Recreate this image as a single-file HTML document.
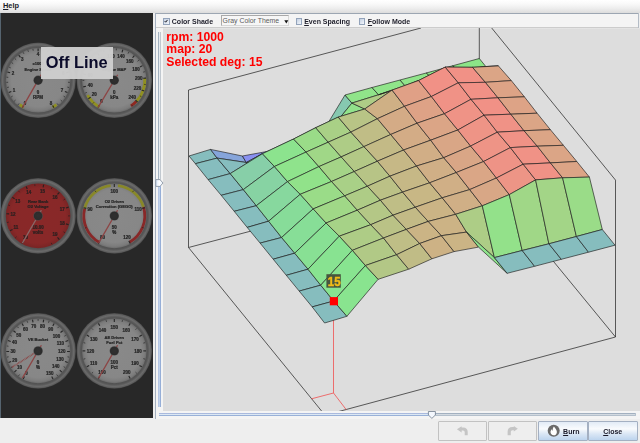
<!DOCTYPE html>
<html><head><meta charset="utf-8"><title>3D Table</title>
<style>
html,body{margin:0;padding:0;}
body{width:640px;height:443px;overflow:hidden;background:#eeeeee;position:relative;font-family:"Liberation Sans",sans-serif;}
.abs{position:absolute;}
#menubar{left:0;top:0;width:640px;height:13px;background:linear-gradient(#ffffff 0%,#f9f9f9 30%,#ededed 65%,#dcdcdc 100%);}
#help{left:3px;top:1.2px;font-size:7.4px;font-weight:bold;color:#1c1c28;line-height:10px;}
#help u{text-decoration:underline;text-underline-offset:0.5px;}
#dark{left:0;top:13px;width:153px;height:405.2px;background:#282828;}
#lborder{left:0;top:13px;width:1px;height:405.2px;background:#56646f;}
#rpanel{left:155px;top:13px;width:485px;height:405.5px;background:#f4f4f4;border-left:1px solid #a4b0c0;border-top:1px solid #9ca6b2;box-sizing:border-box;}
#tbline{left:156px;top:27px;width:482px;height:1px;background:#cccccc;}
#view{left:163px;top:28px;width:477px;height:383px;background:linear-gradient(#e8e8e8 0px,#dddddd 1.2px);}
.cb{width:4.2px;height:4.2px;border:0.9px solid #93a3ba;background:linear-gradient(135deg,#c4d0e2,#f2f6fb);top:18.4px;}
.lbl{font-size:7px;font-weight:bold;color:#1e1e2a;top:16.7px;line-height:10px;white-space:nowrap;}
#combo{left:220.5px;top:15.3px;width:68px;height:11px;box-sizing:border-box;border:1px solid #a9a9a9;border-right-color:#d8d8d8;border-bottom-color:#d8d8d8;background:#f6f6f6;}
#combotxt{left:222.6px;top:16.3px;font-size:6.9px;color:#5c5c5c;line-height:10px;white-space:nowrap;}
.red{color:#ff0000;font-weight:bold;font-size:12.2px;line-height:12.2px;left:166.3px;white-space:nowrap;}
#offline{left:40.5px;top:46.7px;width:72.3px;height:32.8px;background:rgba(207,207,207,0.96);}
#offtxt{left:40.5px;top:45.8px;width:72.3px;text-align:center;font-weight:bold;font-size:16.4px;line-height:32px;color:#0b0b2a;white-space:nowrap;}
.btn{top:421px;height:19.5px;box-sizing:border-box;border:1px solid #9eaabc;border-radius:1px;}
.btn.dis{background:#eeeeee;border-color:#c2c2c2;}
.btn.en{background:linear-gradient(#e2ebf6 0%,#f9fbfd 38%,#dbe7f5 65%,#bdd4ee 100%);border-color:#a4b0c2;}
.btxt{font-size:7px;font-weight:bold;color:#1a1a2a;top:426.7px;line-height:10px;white-space:nowrap;}
.gn{font-size:4.5px;font-weight:bold;text-anchor:middle;stroke-width:0.22px;font-family:"Liberation Sans",sans-serif;}
.gl{font-size:4.1px;font-weight:bold;text-anchor:middle;stroke-width:0.22px;font-family:"Liberation Sans",sans-serif;}
</style></head><body>
<div id="menubar" class="abs"></div>
<div id="help" class="abs"><u>H</u>elp</div>
<div id="dark" class="abs"></div>
<div id="lborder" class="abs"></div>
<svg class="abs" style="left:0;top:13px;will-change:transform" width="153" height="406" viewBox="0 13 153 406">
<defs>
<radialGradient id="bez" cx="0.5" cy="0.5" r="0.5">
<stop offset="0" stop-color="#525252"/><stop offset="0.86" stop-color="#525252"/><stop offset="0.895" stop-color="#585858"/><stop offset="0.94" stop-color="#6b6b6b"/><stop offset="0.975" stop-color="#5c5c5c"/><stop offset="1" stop-color="#444444"/>
</radialGradient>
<radialGradient id="faceL" cx="0.5" cy="0.5" r="0.5">
<stop offset="0" stop-color="#898989"/><stop offset="0.82" stop-color="#878787"/><stop offset="0.94" stop-color="#7c7c7c"/><stop offset="1" stop-color="#6c6c6c"/>
</radialGradient>
<radialGradient id="faceR" cx="0.5" cy="0.5" r="0.5">
<stop offset="0" stop-color="#892828"/><stop offset="0.85" stop-color="#882828"/><stop offset="1" stop-color="#782424"/>
</radialGradient>
<radialGradient id="hub" cx="0.5" cy="0.5" r="0.5">
<stop offset="0" stop-color="#303030"/><stop offset="0.8" stop-color="#2c2c2c"/><stop offset="1" stop-color="#4a4a4a"/>
</radialGradient>
</defs>
<g>
<circle cx="38.1" cy="80.3" r="37.8" fill="url(#bez)"/>
<circle cx="38.1" cy="80.3" r="32.3" fill="url(#faceL)"/>
<path d="M23.78 107.23 A30.50 30.50 0 0 1 19.74 104.66" stroke="#909020" stroke-width="2.8" fill="none"/>
<path d="M56.46 104.66 A30.50 30.50 0 0 1 52.42 107.23" stroke="#909020" stroke-width="2.8" fill="none"/>
<line x1="23.60" y1="105.41" x2="22.20" y2="107.84" stroke="#262626" stroke-width="1.1"/>
<line x1="19.07" y1="103.49" x2="17.93" y2="104.88" stroke="#262626" stroke-width="0.7"/>
<line x1="15.54" y1="100.08" x2="14.19" y2="101.27" stroke="#262626" stroke-width="0.7"/>
<line x1="12.62" y1="96.14" x2="11.10" y2="97.09" stroke="#262626" stroke-width="0.7"/>
<line x1="11.31" y1="91.40" x2="8.72" y2="92.47" stroke="#262626" stroke-width="1.1"/>
<line x1="8.88" y1="87.11" x2="7.13" y2="87.52" stroke="#262626" stroke-width="0.7"/>
<line x1="8.16" y1="82.26" x2="6.37" y2="82.38" stroke="#262626" stroke-width="0.7"/>
<line x1="8.24" y1="77.36" x2="6.45" y2="77.18" stroke="#262626" stroke-width="0.7"/>
<line x1="10.09" y1="72.79" x2="7.38" y2="72.07" stroke="#262626" stroke-width="1.1"/>
<line x1="10.77" y1="67.92" x2="9.13" y2="67.18" stroke="#262626" stroke-width="0.7"/>
<line x1="13.16" y1="63.63" x2="11.66" y2="62.63" stroke="#262626" stroke-width="0.7"/>
<line x1="16.20" y1="59.79" x2="14.89" y2="58.56" stroke="#262626" stroke-width="0.7"/>
<line x1="20.45" y1="57.29" x2="18.74" y2="55.07" stroke="#262626" stroke-width="1.1"/>
<line x1="23.96" y1="53.84" x2="23.11" y2="52.25" stroke="#262626" stroke-width="0.7"/>
<line x1="28.46" y1="51.89" x2="27.88" y2="50.19" stroke="#262626" stroke-width="0.7"/>
<line x1="33.21" y1="50.70" x2="32.92" y2="48.92" stroke="#262626" stroke-width="0.7"/>
<line x1="38.10" y1="51.30" x2="38.10" y2="48.50" stroke="#262626" stroke-width="1.1"/>
<line x1="42.99" y1="50.70" x2="43.28" y2="48.92" stroke="#262626" stroke-width="0.7"/>
<line x1="47.74" y1="51.89" x2="48.32" y2="50.19" stroke="#262626" stroke-width="0.7"/>
<line x1="52.24" y1="53.84" x2="53.09" y2="52.25" stroke="#262626" stroke-width="0.7"/>
<line x1="55.75" y1="57.29" x2="57.46" y2="55.07" stroke="#262626" stroke-width="1.1"/>
<line x1="60.00" y1="59.79" x2="61.31" y2="58.56" stroke="#262626" stroke-width="0.7"/>
<line x1="63.04" y1="63.63" x2="64.54" y2="62.63" stroke="#262626" stroke-width="0.7"/>
<line x1="65.43" y1="67.92" x2="67.07" y2="67.18" stroke="#262626" stroke-width="0.7"/>
<line x1="66.11" y1="72.79" x2="68.82" y2="72.07" stroke="#262626" stroke-width="1.1"/>
<line x1="67.96" y1="77.36" x2="69.75" y2="77.18" stroke="#262626" stroke-width="0.7"/>
<line x1="68.04" y1="82.26" x2="69.83" y2="82.38" stroke="#262626" stroke-width="0.7"/>
<line x1="67.32" y1="87.11" x2="69.07" y2="87.52" stroke="#262626" stroke-width="0.7"/>
<line x1="64.89" y1="91.40" x2="67.48" y2="92.47" stroke="#262626" stroke-width="1.1"/>
<line x1="63.58" y1="96.14" x2="65.10" y2="97.09" stroke="#262626" stroke-width="0.7"/>
<line x1="60.66" y1="100.08" x2="62.01" y2="101.27" stroke="#262626" stroke-width="0.7"/>
<line x1="57.13" y1="103.49" x2="58.27" y2="104.88" stroke="#262626" stroke-width="0.7"/>
<line x1="52.60" y1="105.41" x2="54.00" y2="107.84" stroke="#262626" stroke-width="1.1"/>
<text x="25.1" y="104.5" class="gn" fill="#262626" stroke="#262626">0</text>
<text x="14.1" y="91.9" class="gn" fill="#262626" stroke="#262626">1</text>
<text x="13.0" y="75.3" class="gn" fill="#262626" stroke="#262626">2</text>
<text x="22.3" y="61.4" class="gn" fill="#262626" stroke="#262626">3</text>
<text x="38.1" y="56.0" class="gn" fill="#262626" stroke="#262626">4</text>
<text x="53.9" y="61.4" class="gn" fill="#262626" stroke="#262626">5</text>
<text x="63.2" y="75.3" class="gn" fill="#262626" stroke="#262626">6</text>
<text x="62.1" y="91.9" class="gn" fill="#262626" stroke="#262626">7</text>
<text x="51.1" y="104.5" class="gn" fill="#262626" stroke="#262626">8</text>
<text x="38.1" y="71.0" class="gl" fill="#262626" stroke="#262626">Engine Speed</text>
<text x="38.1" y="65.0" class="gl" fill="#262626" stroke="#262626">x1000</text>
<text x="38.1" y="93.7" class="gn" fill="#262626" stroke="#262626">0</text>
<text x="38.1" y="98.7" class="gn" fill="#262626" stroke="#262626">RPM</text>

<line x1="41.35" y1="74.67" x2="22.35" y2="107.58" stroke="#8c4444" stroke-width="1.3"/>
<circle cx="38.1" cy="80.3" r="4.7" fill="url(#hub)"/>
</g>
<g>
<circle cx="114.3" cy="80.3" r="37.8" fill="url(#bez)"/>
<circle cx="114.3" cy="80.3" r="32.3" fill="url(#faceL)"/>
<path d="M99.51 106.98 A30.50 30.50 0 0 1 87.62 95.09" stroke="#909020" stroke-width="2.8" fill="none"/>
<path d="M144.73 78.17 A30.50 30.50 0 0 1 136.24 101.49" stroke="#909020" stroke-width="2.8" fill="none"/>
<path d="M136.24 101.49 A30.50 30.50 0 0 1 130.91 105.88" stroke="#902820" stroke-width="2.8" fill="none"/>
<line x1="99.36" y1="105.16" x2="97.92" y2="107.56" stroke="#262626" stroke-width="1.1"/>
<line x1="93.94" y1="102.33" x2="92.71" y2="103.65" stroke="#262626" stroke-width="0.7"/>
<line x1="90.69" y1="97.14" x2="88.41" y2="98.77" stroke="#262626" stroke-width="1.1"/>
<line x1="86.84" y1="92.38" x2="85.19" y2="93.11" stroke="#262626" stroke-width="0.7"/>
<line x1="85.93" y1="86.33" x2="83.19" y2="86.91" stroke="#262626" stroke-width="1.1"/>
<line x1="84.30" y1="80.43" x2="82.50" y2="80.44" stroke="#262626" stroke-width="0.7"/>
<line x1="85.88" y1="74.52" x2="83.14" y2="73.96" stroke="#262626" stroke-width="1.1"/>
<line x1="86.74" y1="68.46" x2="85.08" y2="67.75" stroke="#262626" stroke-width="0.7"/>
<line x1="90.54" y1="63.67" x2="88.25" y2="62.06" stroke="#262626" stroke-width="1.1"/>
<line x1="93.74" y1="58.45" x2="92.51" y2="57.14" stroke="#262626" stroke-width="0.7"/>
<line x1="99.15" y1="55.57" x2="97.68" y2="53.19" stroke="#262626" stroke-width="1.1"/>
<line x1="104.16" y1="52.06" x2="103.55" y2="50.37" stroke="#262626" stroke-width="0.7"/>
<line x1="110.26" y1="51.58" x2="109.87" y2="48.81" stroke="#262626" stroke-width="1.1"/>
<line x1="116.26" y1="50.36" x2="116.38" y2="48.57" stroke="#262626" stroke-width="0.7"/>
<line x1="122.05" y1="52.35" x2="122.80" y2="49.66" stroke="#262626" stroke-width="1.1"/>
<line x1="128.04" y1="53.63" x2="128.86" y2="52.03" stroke="#262626" stroke-width="0.7"/>
<line x1="132.55" y1="57.76" x2="134.31" y2="55.59" stroke="#262626" stroke-width="1.1"/>
<line x1="137.53" y1="61.32" x2="138.93" y2="60.18" stroke="#262626" stroke-width="0.7"/>
<line x1="140.02" y1="66.91" x2="142.51" y2="65.62" stroke="#262626" stroke-width="1.1"/>
<line x1="143.17" y1="72.16" x2="144.91" y2="71.67" stroke="#262626" stroke-width="0.7"/>
<line x1="143.23" y1="78.28" x2="146.02" y2="78.08" stroke="#262626" stroke-width="1.1"/>
<line x1="144.03" y1="84.35" x2="145.81" y2="84.59" stroke="#262626" stroke-width="0.7"/>
<line x1="141.64" y1="89.98" x2="144.28" y2="90.92" stroke="#262626" stroke-width="1.1"/>
<line x1="139.95" y1="95.86" x2="141.49" y2="96.80" stroke="#262626" stroke-width="0.7"/>
<line x1="135.51" y1="100.08" x2="137.56" y2="101.99" stroke="#262626" stroke-width="1.1"/>
<line x1="131.61" y1="104.80" x2="132.65" y2="106.27" stroke="#262626" stroke-width="0.7"/>
<text x="101.6" y="103.1" class="gn" fill="#262626" stroke="#262626">0</text>
<text x="94.3" y="96.3" class="gn" fill="#262626" stroke="#262626">20</text>
<text x="90.2" y="87.1" class="gn" fill="#262626" stroke="#262626">40</text>
<text x="90.2" y="77.1" class="gn" fill="#262626" stroke="#262626">60</text>
<text x="94.1" y="67.9" class="gn" fill="#262626" stroke="#262626">80</text>
<text x="101.4" y="61.0" class="gn" fill="#262626" stroke="#262626">100</text>
<text x="110.9" y="57.6" class="gn" fill="#262626" stroke="#262626">120</text>
<text x="120.9" y="58.3" class="gn" fill="#262626" stroke="#262626">140</text>
<text x="129.8" y="62.9" class="gn" fill="#262626" stroke="#262626">160</text>
<text x="136.1" y="70.6" class="gn" fill="#262626" stroke="#262626">180</text>
<text x="138.8" y="80.3" class="gn" fill="#262626" stroke="#262626">200</text>
<text x="137.5" y="90.2" class="gn" fill="#262626" stroke="#262626">220</text>
<text x="132.3" y="98.8" class="gn" fill="#262626" stroke="#262626">240</text>
<text x="114.3" y="71.0" class="gl" fill="#262626" stroke="#262626">Engine MAP</text>
<text x="114.3" y="93.7" class="gn" fill="#262626" stroke="#262626">0</text>
<text x="114.3" y="98.7" class="gn" fill="#262626" stroke="#262626">kPa</text>

<line x1="117.65" y1="74.73" x2="98.08" y2="107.30" stroke="#8c4444" stroke-width="1.3"/>
<circle cx="114.3" cy="80.3" r="4.7" fill="url(#hub)"/>
</g>
<g>
<circle cx="38.1" cy="215.9" r="37.8" fill="url(#bez)"/>
<circle cx="38.1" cy="215.9" r="32.3" fill="url(#faceR)"/>
<line x1="23.60" y1="241.01" x2="22.20" y2="243.44" stroke="#2a2020" stroke-width="1.1"/>
<line x1="16.52" y1="236.74" x2="15.22" y2="237.99" stroke="#2a2020" stroke-width="0.7"/>
<line x1="12.49" y1="229.51" x2="10.02" y2="230.83" stroke="#2a2020" stroke-width="1.1"/>
<line x1="8.76" y1="222.14" x2="6.99" y2="222.51" stroke="#2a2020" stroke-width="0.7"/>
<line x1="9.17" y1="213.88" x2="6.38" y2="213.68" stroke="#2a2020" stroke-width="1.1"/>
<line x1="9.91" y1="205.64" x2="8.22" y2="205.02" stroke="#2a2020" stroke-width="0.7"/>
<line x1="14.64" y1="198.85" x2="12.37" y2="197.21" stroke="#2a2020" stroke-width="1.1"/>
<line x1="19.63" y1="192.26" x2="18.52" y2="190.84" stroke="#2a2020" stroke-width="0.7"/>
<line x1="27.24" y1="189.01" x2="26.19" y2="186.42" stroke="#2a2020" stroke-width="1.1"/>
<line x1="34.96" y1="186.06" x2="34.78" y2="184.27" stroke="#2a2020" stroke-width="0.7"/>
<line x1="43.14" y1="187.34" x2="43.62" y2="184.58" stroke="#2a2020" stroke-width="1.1"/>
<line x1="51.25" y1="188.94" x2="52.04" y2="187.32" stroke="#2a2020" stroke-width="0.7"/>
<line x1="57.50" y1="194.35" x2="59.38" y2="192.27" stroke="#2a2020" stroke-width="1.1"/>
<line x1="63.54" y1="200.00" x2="65.07" y2="199.05" stroke="#2a2020" stroke-width="0.7"/>
<line x1="65.98" y1="207.91" x2="68.67" y2="207.13" stroke="#2a2020" stroke-width="1.1"/>
<line x1="68.10" y1="215.90" x2="69.90" y2="215.90" stroke="#2a2020" stroke-width="0.7"/>
<line x1="65.98" y1="223.89" x2="68.67" y2="224.67" stroke="#2a2020" stroke-width="1.1"/>
<line x1="63.54" y1="231.80" x2="65.07" y2="232.75" stroke="#2a2020" stroke-width="0.7"/>
<line x1="57.50" y1="237.45" x2="59.38" y2="239.53" stroke="#2a2020" stroke-width="1.1"/>
<line x1="51.25" y1="242.86" x2="52.04" y2="244.48" stroke="#2a2020" stroke-width="0.7"/>
<text x="25.5" y="239.4" class="gn" fill="#2a2020" stroke="#2a2020">10</text>
<text x="15.8" y="229.4" class="gn" fill="#2a2020" stroke="#2a2020">11</text>
<text x="13.0" y="215.8" class="gn" fill="#2a2020" stroke="#2a2020">12</text>
<text x="17.7" y="202.8" class="gn" fill="#2a2020" stroke="#2a2020">13</text>
<text x="28.7" y="194.2" class="gn" fill="#2a2020" stroke="#2a2020">14</text>
<text x="42.5" y="192.8" class="gn" fill="#2a2020" stroke="#2a2020">15</text>
<text x="55.0" y="198.9" class="gn" fill="#2a2020" stroke="#2a2020">16</text>
<text x="62.3" y="210.7" class="gn" fill="#2a2020" stroke="#2a2020">17</text>
<text x="62.3" y="224.5" class="gn" fill="#2a2020" stroke="#2a2020">18</text>
<text x="55.0" y="236.3" class="gn" fill="#2a2020" stroke="#2a2020">19</text>
<text x="38.1" y="203.4" class="gl" fill="#2a2020" stroke="#2a2020">Rear Bank</text>
<text x="38.1" y="208.4" class="gl" fill="#2a2020" stroke="#2a2020">O2 Voltage</text>
<text x="38.1" y="229.3" class="gn" fill="#2a2020" stroke="#2a2020">10.00</text>
<text x="38.1" y="233.9" class="gn" fill="#2a2020" stroke="#2a2020">volts</text>

<line x1="41.35" y1="210.27" x2="22.35" y2="243.18" stroke="#8a6868" stroke-width="1.3"/>
<circle cx="38.1" cy="215.9" r="4.7" fill="url(#hub)"/>
</g>
<g>
<circle cx="114.3" cy="215.9" r="37.8" fill="url(#bez)"/>
<circle cx="114.3" cy="215.9" r="32.3" fill="url(#faceL)"/>
<path d="M99.51 242.58 A30.50 30.50 0 0 1 84.71 208.52" stroke="#882828" stroke-width="2.8" fill="none"/>
<path d="M84.71 208.52 A30.50 30.50 0 0 1 110.58 185.63" stroke="#888828" stroke-width="2.8" fill="none"/>
<path d="M118.02 185.63 A30.50 30.50 0 0 1 143.47 206.98" stroke="#888828" stroke-width="2.8" fill="none"/>
<path d="M143.47 206.98 A30.50 30.50 0 0 1 129.55 242.31" stroke="#882828" stroke-width="2.8" fill="none"/>
<line x1="99.80" y1="241.01" x2="98.40" y2="243.44" stroke="#262626" stroke-width="1.1"/>
<line x1="86.58" y1="227.38" x2="84.92" y2="228.07" stroke="#262626" stroke-width="0.7"/>
<line x1="86.29" y1="208.39" x2="83.58" y2="207.67" stroke="#262626" stroke-width="1.1"/>
<line x1="96.04" y1="192.10" x2="94.94" y2="190.67" stroke="#262626" stroke-width="0.7"/>
<line x1="114.30" y1="186.90" x2="114.30" y2="184.10" stroke="#262626" stroke-width="1.1"/>
<line x1="132.56" y1="192.10" x2="133.66" y2="190.67" stroke="#262626" stroke-width="0.7"/>
<line x1="142.31" y1="208.39" x2="145.02" y2="207.67" stroke="#262626" stroke-width="1.1"/>
<line x1="142.02" y1="227.38" x2="143.68" y2="228.07" stroke="#262626" stroke-width="0.7"/>
<line x1="128.80" y1="241.01" x2="130.20" y2="243.44" stroke="#262626" stroke-width="1.1"/>
<text x="102.5" y="238.9" class="gn" fill="#262626" stroke="#262626">80</text>
<text x="90.1" y="210.7" class="gn" fill="#262626" stroke="#262626">90</text>
<text x="114.3" y="193.3" class="gn" fill="#262626" stroke="#262626">100</text>
<text x="138.1" y="210.8" class="gn" fill="#262626" stroke="#262626">110</text>
<text x="126.9" y="238.6" class="gn" fill="#262626" stroke="#262626">120</text>
<text x="114.3" y="203.4" class="gl" fill="#262626" stroke="#262626">O2 Driven</text>
<text x="114.3" y="208.4" class="gl" fill="#262626" stroke="#262626">Correction (GEGO)</text>
<text x="114.3" y="229.3" class="gn" fill="#262626" stroke="#262626">50</text>
<text x="114.3" y="233.9" class="gn" fill="#262626" stroke="#262626">%</text>

<line x1="117.55" y1="210.27" x2="98.55" y2="243.18" stroke="#8c4444" stroke-width="1.3"/>
<circle cx="114.3" cy="215.9" r="4.7" fill="url(#hub)"/>
</g>
<g>
<circle cx="38.1" cy="350.9" r="37.8" fill="url(#bez)"/>
<circle cx="38.1" cy="350.9" r="32.3" fill="url(#faceL)"/>
<line x1="24.49" y1="376.51" x2="23.17" y2="378.98" stroke="#262626" stroke-width="1.1"/>
<line x1="19.58" y1="374.50" x2="18.46" y2="375.91" stroke="#262626" stroke-width="0.7"/>
<line x1="16.46" y1="370.20" x2="14.37" y2="372.07" stroke="#262626" stroke-width="1.1"/>
<line x1="12.55" y1="366.62" x2="11.02" y2="367.56" stroke="#262626" stroke-width="0.7"/>
<line x1="11.11" y1="361.51" x2="8.51" y2="362.54" stroke="#262626" stroke-width="1.1"/>
<line x1="8.68" y1="356.80" x2="6.92" y2="357.15" stroke="#262626" stroke-width="0.7"/>
<line x1="9.11" y1="351.51" x2="6.31" y2="351.57" stroke="#262626" stroke-width="1.1"/>
<line x1="8.46" y1="346.24" x2="6.69" y2="345.96" stroke="#262626" stroke-width="0.7"/>
<line x1="10.69" y1="341.43" x2="8.04" y2="340.51" stroke="#262626" stroke-width="1.1"/>
<line x1="11.91" y1="336.26" x2="10.34" y2="335.39" stroke="#262626" stroke-width="0.7"/>
<line x1="15.67" y1="332.52" x2="13.50" y2="330.74" stroke="#262626" stroke-width="1.1"/>
<line x1="18.60" y1="328.10" x2="17.43" y2="326.73" stroke="#262626" stroke-width="0.7"/>
<line x1="23.43" y1="325.89" x2="22.01" y2="323.47" stroke="#262626" stroke-width="1.1"/>
<line x1="27.71" y1="322.76" x2="27.08" y2="321.07" stroke="#262626" stroke-width="0.7"/>
<line x1="33.00" y1="322.35" x2="32.51" y2="319.60" stroke="#262626" stroke-width="1.1"/>
<line x1="38.10" y1="320.90" x2="38.10" y2="319.10" stroke="#262626" stroke-width="0.7"/>
<line x1="43.20" y1="322.35" x2="43.69" y2="319.60" stroke="#262626" stroke-width="1.1"/>
<line x1="48.49" y1="322.76" x2="49.12" y2="321.07" stroke="#262626" stroke-width="0.7"/>
<line x1="52.77" y1="325.89" x2="54.19" y2="323.47" stroke="#262626" stroke-width="1.1"/>
<line x1="57.60" y1="328.10" x2="58.77" y2="326.73" stroke="#262626" stroke-width="0.7"/>
<line x1="60.53" y1="332.52" x2="62.70" y2="330.74" stroke="#262626" stroke-width="1.1"/>
<line x1="64.29" y1="336.26" x2="65.86" y2="335.39" stroke="#262626" stroke-width="0.7"/>
<line x1="65.51" y1="341.43" x2="68.16" y2="340.51" stroke="#262626" stroke-width="1.1"/>
<line x1="67.74" y1="346.24" x2="69.51" y2="345.96" stroke="#262626" stroke-width="0.7"/>
<line x1="67.09" y1="351.51" x2="69.89" y2="351.57" stroke="#262626" stroke-width="1.1"/>
<line x1="67.52" y1="356.80" x2="69.28" y2="357.15" stroke="#262626" stroke-width="0.7"/>
<line x1="65.09" y1="361.51" x2="67.69" y2="362.54" stroke="#262626" stroke-width="1.1"/>
<line x1="63.65" y1="366.62" x2="65.18" y2="367.56" stroke="#262626" stroke-width="0.7"/>
<line x1="59.74" y1="370.20" x2="61.83" y2="372.07" stroke="#262626" stroke-width="1.1"/>
<line x1="56.62" y1="374.50" x2="57.74" y2="375.91" stroke="#262626" stroke-width="0.7"/>
<line x1="51.71" y1="376.51" x2="53.03" y2="378.98" stroke="#262626" stroke-width="1.1"/>
<text x="26.4" y="374.7" class="gn" fill="#262626" stroke="#262626">0</text>
<text x="19.4" y="369.2" class="gn" fill="#262626" stroke="#262626">10</text>
<text x="14.8" y="361.7" class="gn" fill="#262626" stroke="#262626">20</text>
<text x="13.1" y="353.1" class="gn" fill="#262626" stroke="#262626">30</text>
<text x="14.5" y="344.4" class="gn" fill="#262626" stroke="#262626">40</text>
<text x="18.8" y="336.7" class="gn" fill="#262626" stroke="#262626">50</text>
<text x="25.5" y="331.0" class="gn" fill="#262626" stroke="#262626">60</text>
<text x="33.7" y="328.0" class="gn" fill="#262626" stroke="#262626">70</text>
<text x="42.5" y="328.0" class="gn" fill="#262626" stroke="#262626">80</text>
<text x="50.8" y="331.0" class="gn" fill="#262626" stroke="#262626">90</text>
<text x="56.4" y="337.7" class="gn" fill="#262626" stroke="#262626">100</text>
<text x="60.4" y="344.9" class="gn" fill="#262626" stroke="#262626">110</text>
<text x="61.7" y="353.1" class="gn" fill="#262626" stroke="#262626">120</text>
<text x="60.1" y="361.3" class="gn" fill="#262626" stroke="#262626">130</text>
<text x="55.7" y="368.3" class="gn" fill="#262626" stroke="#262626">140</text>
<text x="49.8" y="374.7" class="gn" fill="#262626" stroke="#262626">150</text>
<text x="38.1" y="341.1" class="gl" fill="#262626" stroke="#262626">VE Bucket</text>
<text x="38.1" y="364.3" class="gn" fill="#262626" stroke="#262626">0</text>
<text x="38.1" y="369.3" class="gn" fill="#262626" stroke="#262626">%</text>
<line x1="38.1" y1="350.9" x2="11.81" y2="367.33" stroke="#8c4444" stroke-width="1.7" stroke-dasharray="0.8 0.7"/>
<line x1="41.35" y1="345.27" x2="22.35" y2="378.18" stroke="#8c4444" stroke-width="1.3"/>
<circle cx="38.1" cy="350.9" r="4.7" fill="url(#hub)"/>
</g>
<g>
<circle cx="114.3" cy="350.9" r="37.8" fill="url(#bez)"/>
<circle cx="114.3" cy="350.9" r="32.3" fill="url(#faceL)"/>
<line x1="99.80" y1="376.01" x2="98.40" y2="378.44" stroke="#262626" stroke-width="1.1"/>
<line x1="93.09" y1="372.11" x2="91.81" y2="373.39" stroke="#262626" stroke-width="0.7"/>
<line x1="89.19" y1="365.40" x2="86.76" y2="366.80" stroke="#262626" stroke-width="1.1"/>
<line x1="85.32" y1="358.66" x2="83.58" y2="359.13" stroke="#262626" stroke-width="0.7"/>
<line x1="85.30" y1="350.90" x2="82.50" y2="350.90" stroke="#262626" stroke-width="1.1"/>
<line x1="85.32" y1="343.14" x2="83.58" y2="342.67" stroke="#262626" stroke-width="0.7"/>
<line x1="89.19" y1="336.40" x2="86.76" y2="335.00" stroke="#262626" stroke-width="1.1"/>
<line x1="93.09" y1="329.69" x2="91.81" y2="328.41" stroke="#262626" stroke-width="0.7"/>
<line x1="99.80" y1="325.79" x2="98.40" y2="323.36" stroke="#262626" stroke-width="1.1"/>
<line x1="106.54" y1="321.92" x2="106.07" y2="320.18" stroke="#262626" stroke-width="0.7"/>
<line x1="114.30" y1="321.90" x2="114.30" y2="319.10" stroke="#262626" stroke-width="1.1"/>
<line x1="122.06" y1="321.92" x2="122.53" y2="320.18" stroke="#262626" stroke-width="0.7"/>
<line x1="128.80" y1="325.79" x2="130.20" y2="323.36" stroke="#262626" stroke-width="1.1"/>
<line x1="135.51" y1="329.69" x2="136.79" y2="328.41" stroke="#262626" stroke-width="0.7"/>
<line x1="139.41" y1="336.40" x2="141.84" y2="335.00" stroke="#262626" stroke-width="1.1"/>
<line x1="143.28" y1="343.14" x2="145.02" y2="342.67" stroke="#262626" stroke-width="0.7"/>
<line x1="143.30" y1="350.90" x2="146.10" y2="350.90" stroke="#262626" stroke-width="1.1"/>
<line x1="143.28" y1="358.66" x2="145.02" y2="359.13" stroke="#262626" stroke-width="0.7"/>
<line x1="139.41" y1="365.40" x2="141.84" y2="366.80" stroke="#262626" stroke-width="1.1"/>
<line x1="135.51" y1="372.11" x2="136.79" y2="373.39" stroke="#262626" stroke-width="0.7"/>
<line x1="128.80" y1="376.01" x2="130.20" y2="378.44" stroke="#262626" stroke-width="1.1"/>
<text x="101.9" y="374.1" class="gn" fill="#262626" stroke="#262626">100</text>
<text x="93.7" y="364.5" class="gn" fill="#262626" stroke="#262626">110</text>
<text x="90.5" y="352.6" class="gn" fill="#262626" stroke="#262626">120</text>
<text x="93.7" y="340.7" class="gn" fill="#262626" stroke="#262626">130</text>
<text x="102.4" y="332.0" class="gn" fill="#262626" stroke="#262626">140</text>
<text x="114.3" y="328.8" class="gn" fill="#262626" stroke="#262626">150</text>
<text x="126.2" y="332.0" class="gn" fill="#262626" stroke="#262626">160</text>
<text x="134.9" y="340.7" class="gn" fill="#262626" stroke="#262626">170</text>
<text x="138.1" y="352.6" class="gn" fill="#262626" stroke="#262626">180</text>
<text x="134.9" y="364.5" class="gn" fill="#262626" stroke="#262626">190</text>
<text x="126.7" y="374.1" class="gn" fill="#262626" stroke="#262626">200</text>
<text x="114.3" y="338.9" class="gl" fill="#262626" stroke="#262626">AE Driven</text>
<text x="114.3" y="343.9" class="gl" fill="#262626" stroke="#262626">Fuel Pct</text>
<text x="114.3" y="364.3" class="gn" fill="#262626" stroke="#262626">100</text>
<text x="114.3" y="369.3" class="gn" fill="#262626" stroke="#262626">Pct</text>

<line x1="117.55" y1="345.27" x2="98.55" y2="378.18" stroke="#8c4444" stroke-width="1.3"/>
<circle cx="114.3" cy="350.9" r="4.7" fill="url(#hub)"/>
</g>
</svg>
<div id="offline" class="abs"></div>
<div id="offtxt" class="abs">Off Line</div>

<div id="rpanel" class="abs"></div>
<div id="tbline" class="abs"></div>
<div class="abs" style="left:638px;top:13px;width:2px;height:15px;background:#eeeeee;border-left:1px solid #b4bcc6;box-sizing:border-box"></div>
<div class="abs cb" style="left:163.4px"></div>
<svg class="abs" style="left:163.4px;top:18.4px" width="6" height="6" viewBox="0 0 6 6"><path d="M1.7 3.1 L2.7 4.2 L4.5 1.9" stroke="#1a1a22" stroke-width="1" fill="none"/></svg>
<div class="abs lbl" style="left:171.8px">Color Shade</div>
<div id="combo" class="abs"></div>
<div id="combotxt" class="abs">Gray Color Theme</div>
<svg class="abs" style="left:284px;top:19.5px" width="5" height="4" viewBox="0 0 5 4"><path d="M0.3 0.3 L4.3 0.3 L2.3 3.4 Z" fill="#111"/></svg>
<div class="abs cb" style="left:296px"></div>
<div class="abs lbl" style="left:304.2px"><u>E</u>ven Spacing</div>
<div class="abs cb" style="left:359.2px"></div>
<div class="abs lbl" style="left:367.8px"><u>F</u>ollow Mode</div>

<div id="view" class="abs"></div>
<svg class="abs" style="left:163px;top:28px" width="477" height="383" viewBox="0 0 477 383">
<g stroke="#2a2a2a" stroke-width="0.75" fill="none">
<line x1="25.5" y1="62.0" x2="25.5" y2="219.5"/>
<line x1="25.5" y1="62.0" x2="258.0" y2="0.0"/>
<line x1="316.3" y1="0.0" x2="316.3" y2="72.0"/>
<line x1="328.7" y1="0.0" x2="452.5" y2="152.1"/>
<line x1="452.5" y1="152.1" x2="452.5" y2="309.0"/>
<line x1="25.5" y1="219.5" x2="162.0" y2="387.2"/>
<line x1="162.0" y1="387.2" x2="452.5" y2="309.0"/>
<line x1="25.5" y1="219.5" x2="316.3" y2="143.0"/>
<line x1="316.3" y1="143.0" x2="452.5" y2="309.0"/>
</g>
<g stroke="#f05050" stroke-width="0.8" fill="none">
<line x1="170.5" y1="277.0" x2="170.5" y2="365.0"/>
<line x1="170.5" y1="365.0" x2="148.5" y2="370.8"/>
<line x1="170.5" y1="365.0" x2="183.2" y2="381.6"/>
</g>
<g stroke="#1c1c1c" stroke-width="0.65" stroke-linejoin="round">
<polygon points="26.0,128.0 47.5,121.4 54.1,130.1 32.4,135.7" fill="#86bdbe"/>
<polygon points="47.5,121.4 79.4,128.0 83.3,134.5 54.1,130.1" fill="#86a5da"/>
<polygon points="79.4,128.0 117.5,121.0 124.0,130.0 83.3,134.5" fill="#8890f0"/>
<polygon points="117.5,121.0 139.7,119.0 146.2,120.0 124.0,130.0" fill="#8890f0"/>
<polygon points="139.7,119.0 162.0,100.0 168.7,99.9 146.2,120.0" fill="#879fe0"/>
<polygon points="162.0,100.0 182.0,67.0 188.9,75.1 168.7,99.9" fill="#86c8b0"/>
<polygon points="182.0,67.0 209.0,59.5 215.5,66.8 188.9,75.1" fill="#90e48a"/>
<polygon points="209.0,59.5 237.0,52.0 242.5,58.3 215.5,66.8" fill="#90e48a"/>
<polygon points="237.0,52.0 263.2,45.0 269.5,50.0 242.5,58.3" fill="#90e48a"/>
<polygon points="263.2,45.0 289.5,37.8 296.0,42.5 269.5,50.0" fill="#8ee488"/>
<polygon points="289.5,37.8 316.3,30.5 322.8,38.5 296.0,42.5" fill="#8ce488"/>
<polygon points="32.4,135.7 54.1,130.1 67.2,145.6 45.1,151.6" fill="#86bdbe"/>
<polygon points="54.1,130.1 83.3,134.5 99.4,125.7 67.2,145.6" fill="#86bdbe"/>
<polygon points="83.3,134.5 124.0,130.0 130.5,111.0 99.4,125.7" fill="#86bdbe"/>
<polygon points="124.0,130.0 146.2,120.0 152.7,99.7 130.5,111.0" fill="#86c6b3"/>
<polygon points="146.2,120.0 168.7,99.9 175.2,89.1 152.7,99.7" fill="#87dd98"/>
<polygon points="168.7,99.9 188.9,75.1 201.7,81.0 175.2,89.1" fill="#91e28b"/>
<polygon points="188.9,75.1 215.5,66.8 229.1,62.1 201.7,81.0" fill="#aecc86"/>
<polygon points="215.5,66.8 242.5,58.3 255.6,52.5 229.1,62.1" fill="#bdbf86"/>
<polygon points="242.5,58.3 269.5,50.0 282.2,39.1 255.6,52.5" fill="#c8b685"/>
<polygon points="269.5,50.0 296.0,42.5 309.5,39.3 282.2,39.1" fill="#c9b585"/>
<polygon points="296.0,42.5 322.8,38.5 335.4,37.9 309.5,39.3" fill="#bbc186"/>
<polygon points="45.1,151.6 67.2,145.6 80.3,161.6 58.2,167.3" fill="#86bdbe"/>
<polygon points="67.2,145.6 99.4,125.7 111.4,138.5 80.3,161.6" fill="#87cfa8"/>
<polygon points="99.4,125.7 130.5,111.0 143.0,124.1 111.4,138.5" fill="#8ce38e"/>
<polygon points="130.5,111.0 152.7,99.7 165.2,114.2 143.0,124.1" fill="#9adc88"/>
<polygon points="152.7,99.7 175.2,89.1 187.9,104.1 165.2,114.2" fill="#a9d086"/>
<polygon points="175.2,89.1 201.7,81.0 214.4,90.7 187.9,104.1" fill="#b8c486"/>
<polygon points="201.7,81.0 229.1,62.1 241.5,78.3 214.4,90.7" fill="#cfb085"/>
<polygon points="229.1,62.1 255.6,52.5 268.4,68.5 241.5,78.3" fill="#e0a086"/>
<polygon points="255.6,52.5 282.2,39.1 295.3,54.8 268.4,68.5" fill="#f19186"/>
<polygon points="282.2,39.1 309.5,39.3 322.4,54.3 295.3,54.8" fill="#f19186"/>
<polygon points="309.5,39.3 335.4,37.9 348.3,52.6 322.4,54.3" fill="#dba586"/>
<polygon points="58.2,167.3 80.3,161.6 93.3,177.7 71.2,183.3" fill="#86bdbe"/>
<polygon points="80.3,161.6 111.4,138.5 124.5,153.6 93.3,177.7" fill="#87d3a3"/>
<polygon points="111.4,138.5 143.0,124.1 155.9,138.6 124.5,153.6" fill="#8fe38c"/>
<polygon points="143.0,124.1 165.2,114.2 178.2,128.9 155.9,138.6" fill="#a0d787"/>
<polygon points="165.2,114.2 187.9,104.1 200.9,118.6 178.2,128.9" fill="#aecc86"/>
<polygon points="187.9,104.1 214.4,90.7 227.7,106.5 200.9,118.6" fill="#c0bd86"/>
<polygon points="214.4,90.7 241.5,78.3 254.1,95.2 227.7,106.5" fill="#d4ab86"/>
<polygon points="241.5,78.3 268.4,68.5 281.5,85.7 254.1,95.2" fill="#dea286"/>
<polygon points="268.4,68.5 295.3,54.8 308.0,71.3 281.5,85.7" fill="#f09286"/>
<polygon points="295.3,54.8 322.4,54.3 335.0,69.8 308.0,71.3" fill="#f19186"/>
<polygon points="322.4,54.3 348.3,52.6 361.4,68.8 335.0,69.8" fill="#dda386"/>
<polygon points="71.2,183.3 93.3,177.7 105.6,193.2 84.2,199.4" fill="#86bdbe"/>
<polygon points="93.3,177.7 124.5,153.6 137.2,166.3 105.6,193.2" fill="#87d89e"/>
<polygon points="124.5,153.6 155.9,138.6 168.5,153.5 137.2,166.3" fill="#91e28a"/>
<polygon points="155.9,138.6 178.2,128.9 191.3,143.5 168.5,153.5" fill="#a4d487"/>
<polygon points="178.2,128.9 200.9,118.6 214.4,133.2 191.3,143.5" fill="#b3c886"/>
<polygon points="200.9,118.6 227.7,106.5 240.6,122.0 214.4,133.2" fill="#c3ba86"/>
<polygon points="227.7,106.5 254.1,95.2 267.7,112.2 240.6,122.0" fill="#d3ac86"/>
<polygon points="254.1,95.2 281.5,85.7 294.8,102.0 267.7,112.2" fill="#dba586"/>
<polygon points="281.5,85.7 308.0,71.3 321.1,87.2 294.8,102.0" fill="#ef9386"/>
<polygon points="308.0,71.3 335.0,69.8 347.8,86.2 321.1,87.2" fill="#f19186"/>
<polygon points="335.0,69.8 361.4,68.8 374.1,85.2 347.8,86.2" fill="#dda386"/>
<polygon points="84.2,199.4 105.6,193.2 118.6,209.5 97.1,215.1" fill="#86bdbe"/>
<polygon points="105.6,193.2 137.2,166.3 150.2,180.9 118.6,209.5" fill="#87dc99"/>
<polygon points="137.2,166.3 168.5,153.5 181.7,167.8 150.2,180.9" fill="#9adc88"/>
<polygon points="168.5,153.5 191.3,143.5 204.4,158.2 181.7,167.8" fill="#a9d087"/>
<polygon points="191.3,143.5 214.4,133.2 226.9,148.2 204.4,158.2" fill="#b7c486"/>
<polygon points="214.4,133.2 240.6,122.0 253.5,138.0 226.9,148.2" fill="#c6b886"/>
<polygon points="240.6,122.0 267.7,112.2 280.7,129.7 253.5,138.0" fill="#d1ae86"/>
<polygon points="267.7,112.2 294.8,102.0 307.6,118.1 280.7,129.7" fill="#d9a686"/>
<polygon points="294.8,102.0 321.1,87.2 334.3,104.2 307.6,118.1" fill="#ee9486"/>
<polygon points="321.1,87.2 347.8,86.2 361.0,102.7 334.3,104.2" fill="#f09286"/>
<polygon points="347.8,86.2 374.1,85.2 387.4,101.7 361.0,102.7" fill="#dba586"/>
<polygon points="97.1,215.1 118.6,209.5 131.7,225.2 110.2,231.2" fill="#86bdbe"/>
<polygon points="118.6,209.5 150.2,180.9 163.1,195.0 131.7,225.2" fill="#87de97"/>
<polygon points="150.2,180.9 181.7,167.8 194.3,182.2 163.1,195.0" fill="#a0d887"/>
<polygon points="181.7,167.8 204.4,158.2 217.4,172.2 194.3,182.2" fill="#aecc86"/>
<polygon points="204.4,158.2 226.9,148.2 239.6,164.1 217.4,172.2" fill="#bbc186"/>
<polygon points="226.9,148.2 253.5,138.0 266.6,154.8 239.6,164.1" fill="#c6b886"/>
<polygon points="253.5,138.0 280.7,129.7 293.3,144.5 266.6,154.8" fill="#d0af86"/>
<polygon points="280.7,129.7 307.6,118.1 320.6,133.5 293.3,144.5" fill="#d9a686"/>
<polygon points="307.6,118.1 334.3,104.2 347.4,119.6 320.6,133.5" fill="#ee9486"/>
<polygon points="334.3,104.2 361.0,102.7 374.3,118.2 347.4,119.6" fill="#f09286"/>
<polygon points="361.0,102.7 387.4,101.7 400.4,117.3 374.3,118.2" fill="#dba586"/>
<polygon points="110.2,231.2 131.7,225.2 145.0,241.2 123.3,247.3" fill="#86bdbe"/>
<polygon points="131.7,225.2 163.1,195.0 176.3,208.2 145.0,241.2" fill="#88e094"/>
<polygon points="163.1,195.0 194.3,182.2 207.7,196.7 176.3,208.2" fill="#a6d287"/>
<polygon points="194.3,182.2 217.4,172.2 230.0,187.2 207.7,196.7" fill="#b4c786"/>
<polygon points="217.4,172.2 239.6,164.1 252.3,179.2 230.0,187.2" fill="#bfbe86"/>
<polygon points="239.6,164.1 266.6,154.8 279.2,169.8 252.3,179.2" fill="#c8b785"/>
<polygon points="266.6,154.8 293.3,144.5 306.7,161.6 279.2,169.8" fill="#d0af86"/>
<polygon points="293.3,144.5 320.6,133.5 333.4,150.0 306.7,161.6" fill="#daa686"/>
<polygon points="320.6,133.5 347.4,119.6 360.2,136.2 333.4,150.0" fill="#ee9386"/>
<polygon points="347.4,119.6 374.3,118.2 387.4,134.9 360.2,136.2" fill="#f09286"/>
<polygon points="374.3,118.2 400.4,117.3 413.8,133.5 387.4,134.9" fill="#dba586"/>
<polygon points="123.3,247.3 145.0,241.2 157.7,257.2 136.2,263.1" fill="#86bdbe"/>
<polygon points="145.0,241.2 176.3,208.2 189.4,222.3 157.7,257.2" fill="#88e391"/>
<polygon points="176.3,208.2 207.7,196.7 220.5,210.0 189.4,222.3" fill="#aecc86"/>
<polygon points="207.7,196.7 230.0,187.2 243.3,201.4 220.5,210.0" fill="#bac286"/>
<polygon points="230.0,187.2 252.3,179.2 265.2,193.4 243.3,201.4" fill="#c3ba86"/>
<polygon points="252.3,179.2 279.2,169.8 292.7,186.3 265.2,193.4" fill="#cbb485"/>
<polygon points="279.2,169.8 306.7,161.6 319.3,177.8 292.7,186.3" fill="#d0af86"/>
<polygon points="306.7,161.6 333.4,150.0 346.3,166.6 319.3,177.8" fill="#d8a786"/>
<polygon points="333.4,150.0 360.2,136.2 372.6,151.9 346.3,166.6" fill="#ed9586"/>
<polygon points="360.2,136.2 387.4,134.9 399.6,149.8 372.6,151.9" fill="#f09286"/>
<polygon points="387.4,134.9 413.8,133.5 426.4,149.1 399.6,149.8" fill="#dca486"/>
<polygon points="136.2,263.1 157.7,257.2 170.7,273.0 149.2,278.9" fill="#86bdbe"/>
<polygon points="157.7,257.2 189.4,222.3 202.4,237.5 170.7,273.0" fill="#88e490"/>
<polygon points="189.4,222.3 220.5,210.0 233.6,226.7 202.4,237.5" fill="#b1c986"/>
<polygon points="220.5,210.0 243.3,201.4 256.7,215.5 233.6,226.7" fill="#bfbe86"/>
<polygon points="243.3,201.4 265.2,193.4 278.4,207.7 256.7,215.5" fill="#cbb485"/>
<polygon points="265.2,193.4 292.7,186.3 303.5,204.1 278.4,207.7" fill="#ccb385"/>
<polygon points="292.7,186.3 319.3,177.8 331.4,229.6 303.5,204.1" fill="#adcd86"/>
<polygon points="319.3,177.8 346.3,166.6 359.2,222.5 331.4,229.6" fill="#93e18a"/>
<polygon points="346.3,166.6 372.6,151.9 385.9,215.8 359.2,222.5" fill="#a0d787"/>
<polygon points="372.6,151.9 399.6,149.8 413.4,208.5 385.9,215.8" fill="#a3d587"/>
<polygon points="399.6,149.8 426.4,149.1 439.3,201.5 413.4,208.5" fill="#9adc88"/>
<polygon points="149.2,278.9 170.7,273.0 183.9,288.3 161.6,295.0" fill="#86bdbe"/>
<polygon points="170.7,273.0 202.4,237.5 215.1,251.3 183.9,288.3" fill="#89e48f"/>
<polygon points="202.4,237.5 233.6,226.7 245.7,241.2 215.1,251.3" fill="#b3c786"/>
<polygon points="233.6,226.7 256.7,215.5 268.9,230.8 245.7,241.2" fill="#c0bc86"/>
<polygon points="256.7,215.5 278.4,207.7 291.0,223.6 268.9,230.8" fill="#cdb285"/>
<polygon points="278.4,207.7 303.5,204.1 315.5,219.1 291.0,223.6" fill="#cbb485"/>
<polygon points="303.5,204.1 331.4,229.6 344.1,245.3 315.5,219.1" fill="#8ee38c"/>
<polygon points="331.4,229.6 359.2,222.5 371.6,238.3 344.1,245.3" fill="#86bdbe"/>
<polygon points="359.2,222.5 385.9,215.8 398.3,231.3 371.6,238.3" fill="#86bdbe"/>
<polygon points="385.9,215.8 413.4,208.5 425.5,224.2 398.3,231.3" fill="#86bdbe"/>
<polygon points="413.4,208.5 439.3,201.5 452.0,217.2 425.5,224.2" fill="#86bdbe"/>
</g>
<g stroke="#2a2a2a" stroke-width="0.75" fill="none">

</g>
<rect x="166.8" y="269.1" width="8.2" height="8.2" fill="#ff0000"/>
<rect x="163.4" y="246.2" width="14.4" height="13.5" fill="#47563e"/>
<text transform="translate(171.2,257.6) scale(0.86,1)" font-family="Liberation Sans, sans-serif" font-weight="bold" font-size="13.3" fill="#f2bc18" stroke="#f2bc18" stroke-width="0.45" text-anchor="middle">15</text>
</svg>
<div class="abs red" style="top:30.7px">rpm: 1000</div>
<div class="abs red" style="top:42.7px">map: 20</div>
<div class="abs red" style="top:55.7px">Selected deg: 15</div>

<div class="abs" style="left:158px;top:31.5px;width:3px;height:375.4px;background:linear-gradient(to right,#9cacbc 0%,#a4b2c0 22%,#e8ecf0 48%,#e8ecf0 62%,#b8c0c8 88%,#c4cad0 100%)"></div>
<div class="abs" style="left:158px;top:184px;width:3px;height:222.9px;background:linear-gradient(to right,#b0c0e0 0%,#b8c8e6 25%,#c2d4ec 50%,#98b0d8 80%,#8ea8d2 100%)"></div>
<div class="abs" style="left:158.9px;top:412.9px;width:476.8px;height:3.6px;box-sizing:border-box;border:0.9px solid #b4c0cc;border-top-color:#a2b0c0;border-radius:1px;background:#d3dae1"></div>
<div class="abs" style="left:158.9px;top:412.8px;width:272px;height:3.4px;background:linear-gradient(to bottom,#a8b8dc 0%,#aabade 22%,#dce8f4 50%,#9ab2d8 80%,#90acd4 100%)"></div>
<svg class="abs" style="left:154px;top:178px" width="11" height="10" viewBox="0 0 11 10"><defs><linearGradient id="tg" x1="0" y1="0" x2="1" y2="0"><stop offset="0" stop-color="#dbe8fa"/><stop offset="0.5" stop-color="#ffffff"/><stop offset="1" stop-color="#e4eefc"/></linearGradient></defs><path d="M1.8 1.6 L6 1.6 L9 5 L6 8.4 L1.8 8.4 Z" fill="url(#tg)" stroke="#7f8a98" stroke-width="0.8"/></svg>
<svg class="abs" style="left:427px;top:410px" width="10" height="10" viewBox="0 0 10 10"><path d="M1.4 1.5 L8.4 1.5 L8.4 5 L4.9 8.4 L1.4 5 Z" fill="#f4f8fe" stroke="#6f7c8c" stroke-width="0.8"/></svg>

<div class="abs btn dis" style="left:438.4px;width:48.6px"></div>
<div class="abs btn dis" style="left:488.2px;width:48.8px"></div>
<div class="abs btn en" style="left:538.4px;width:49.7px"></div>
<div class="abs btn en" style="left:588.1px;width:49.6px"></div>
<svg class="abs" style="left:452px;top:422px" width="22" height="18" viewBox="452 422 22 18"><g fill="none" stroke="#c5c5c5" stroke-width="3" stroke-linecap="butt" stroke-linejoin="round"><path d="M466.2 435.2 L466.2 432 Q466.2 429 463 429 L460.5 429"/></g><path d="M456.9 429.3 L461.6 426.2 L461.6 432.4 Z" fill="#c5c5c5"/></svg>
<svg class="abs" style="left:500px;top:422px" width="22" height="18" viewBox="500 422 22 18"><g fill="none" stroke="#c5c5c5" stroke-width="3.2" stroke-linecap="butt" stroke-linejoin="round"><path d="M509.2 435.2 L509.2 431.8 Q509.2 428.6 512.4 428.6 L514.5 428.6"/></g><path d="M517.8 428.7 L513.8 425.9 L513.8 431.5 Z" fill="#c5c5c5"/></svg>
<svg class="abs" style="left:547px;top:424px" width="14" height="14" viewBox="547 424 14 14"><circle cx="553.7" cy="430.7" r="6" fill="#6a6a6a"/><path d="M553.9 426.5 C554.6 428 556.9 429.3 556.9 431.9 C556.9 433.9 555.5 435.3 553.7 435.3 C551.9 435.3 550.5 433.9 550.5 432.1 C550.5 430.8 551.2 429.9 551.8 429.2 C551.9 430 552.2 430.5 552.7 430.8 C552.5 429.2 553 427.6 553.9 426.5 Z" fill="#ffffff"/></svg>
<div class="abs btxt" style="left:563.1px"><u>B</u>urn</div>
<div class="abs btxt" style="left:603.2px"><u>C</u>lose</div>
</body></html>
